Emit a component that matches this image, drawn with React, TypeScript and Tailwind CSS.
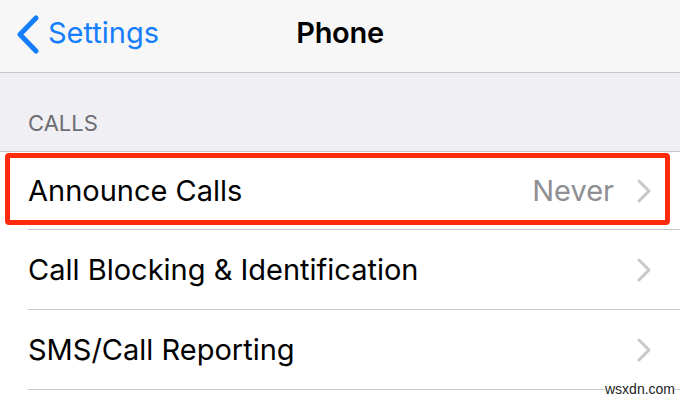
import React from "react";

const rows = [
  { label: "Announce Calls", value: "Never", highlight: true },
  { label: "Call Blocking & Identification" },
  { label: "SMS/Call Reporting" },
];

function Chevron() {
  return (
    <svg width="16" height="26" viewBox="0 0 16 26" fill="none" className="shrink-0">
      <path d="M3 3l10 10-10 10" stroke="#c7c7cc" strokeWidth="3" strokeLinecap="round" strokeLinejoin="round" />
    </svg>
  );
}

export default function App() {
  return (
    <div
      className="relative w-[680px] h-[401px] overflow-hidden bg-white"
      style={{ fontFamily: "Inter, 'Liberation Sans', sans-serif" }}
    >
      {/* nav bar */}
      <div className="relative flex h-[73px] items-center border-b border-[#c8c7cc] bg-[#f7f7f7] pb-[6px]">
        <div className="flex items-center pl-[16px] text-[#157efb]">
          <svg width="24" height="40" viewBox="0 0 24 40" fill="none" className="mt-[4px]">
            <path d="M20 3L4 19.5 20 36" stroke="#157efb" strokeWidth="5" strokeLinecap="round" strokeLinejoin="round" />
          </svg>
          <span className="ml-[8px] text-[29px]">Settings</span>
        </div>
        <div className="absolute left-0 right-0 top-0 flex h-full items-center justify-center pb-[6px] pointer-events-none">
          <span className="text-[29px] font-semibold tracking-[-0.3px] text-black">Phone</span>
        </div>
      </div>

      {/* section header */}
      <div className="flex h-[78px] items-end bg-[#efeff4] pb-[11px] pl-[28px]">
        <span className="text-[22px] text-[#6d6d72]">CALLS</span>
      </div>

      {/* group */}
      <div className="border-t border-[#c8c7cc] bg-white">
        {rows.map((r, i) => (
          <div key={i} className="relative pl-[28px]">
            <div
              className={`flex items-center border-b border-[#c8c7cc] pr-[28px] ${i === 0 ? "h-[78px]" : "h-[80px]"}`}
            >
              <span className="flex-1 text-[29px] text-black">{r.label}</span>
              {r.value && <span className="mr-[22px] text-[29px] text-[#8e8e93]">{r.value}</span>}
              <Chevron />
            </div>
            {r.highlight && (
              <div className="pointer-events-none absolute left-[5px] top-[1px] h-[72px] w-[665px] rounded-[4px] border-[5px] border-[#ff2a0c]" />
            )}
          </div>
        ))}
      </div>

      <span
        className="absolute left-[605px] top-[381px] bg-white text-[14px] leading-[16px] text-[#222]"
        style={{ fontFamily: "'Liberation Sans', sans-serif" }}
      >
        wsxdn.com
      </span>
    </div>
  );
}
